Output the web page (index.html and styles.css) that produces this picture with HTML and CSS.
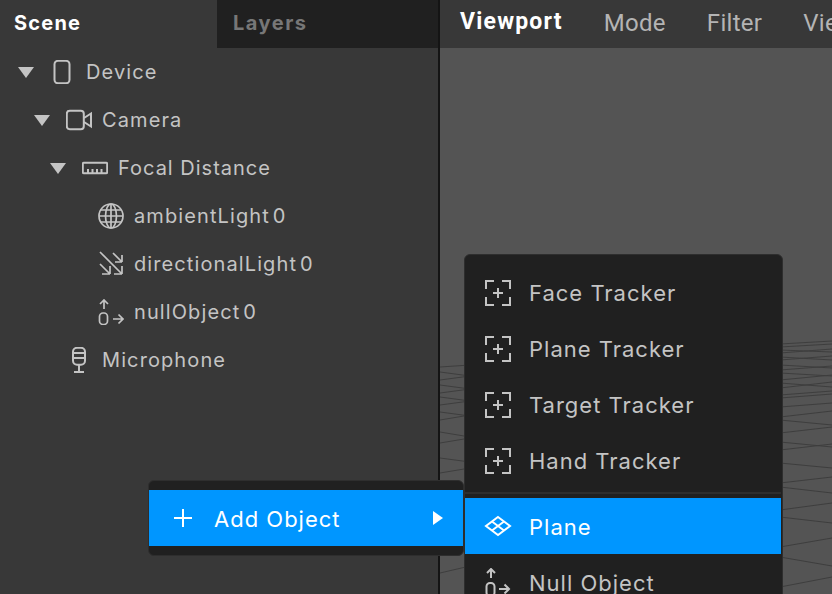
FILE: index.html
```html
<!DOCTYPE html>
<html lang="en">
<head>
    <meta charset="UTF-8">
    <title>Scene</title>
    <link rel="stylesheet" href="styles.css">
</head>
<body>
    <div class="app">
        <aside class="scene-panel">
            <div class="tabs">
                <div class="tab active">Scene</div>
                <div class="tab dim">Layers</div>
            </div>
            <ul class="tree">
                <li class="row lvl0">
                    <span class="caret"></span>
                    <svg class="ico" viewBox="0 0 26 24"><rect x="4.500" y="0.800" width="15" height="22.400" rx="3.500"/></svg>
                    <span class="name">Device</span>
                </li>
                <li class="row lvl1">
                    <span class="caret"></span>
                    <svg class="ico" viewBox="0 0 26 24"><rect x="0.800" y="2.800" width="17" height="18.400" rx="3"/><path d="M18 10l7-4.500v13L18 14"/></svg>
                    <span class="name">Camera</span>
                </li>
                <li class="row lvl2">
                    <span class="caret"></span>
                    <svg class="ico" viewBox="0 0 26 24"><rect x="0.800" y="6.800" width="24.400" height="10.400" rx="1"/><path d="M6 17v-4M10.500 17v-4M15 17v-4M19.500 17v-4"/></svg>
                    <span class="name focal">Focal Distance</span>
                </li>
                <li class="row lvl3">
                    <svg class="ico" viewBox="0 0 26 26"><circle cx="13" cy="13" r="12"/><ellipse cx="13" cy="13" rx="5.500" ry="12"/><path d="M13 1v24M1 13h24M3 7h20M3 19h20"/></svg>
                    <span class="name">ambientLight<span class="idx">0</span></span>
                </li>
                <li class="row lvl3">
                    <svg class="ico" viewBox="0 0 26 26"><path d="M2 1l22 22M24 23h-8M24 23v-8M2 13l10 10M12 23H4M12 23v-8M15 2l9 9M24 11h-7M24 11V4"/></svg>
                    <span class="name">directionalLight<span class="idx">0</span></span>
                </li>
                <li class="row lvl3">
                    <svg class="ico" viewBox="0 0 26 26"><path d="M6 10V1M2 5l4-4 4 4"/><rect x="1.500" y="14" width="8" height="11.500" rx="3.500"/><path d="M15 20h10M20.500 15.500l4.500 4.500-4.500 4.500"/></svg>
                    <span class="name">nullObject<span class="idx">0</span></span>
                </li>
                <li class="row lvl1 no-caret">
                    <svg class="ico mic" viewBox="0 0 14 26"><rect x="1" y="0.800" width="12" height="17" rx="4"/><path d="M1 6h12M1 11h12M7 18v7M2 25h10"/></svg>
                    <span class="name">Microphone</span>
                </li>
            </ul>
        </aside>
        <main class="viewport">
            <nav class="topbar">
                <span class="top-item active">Viewport</span>
                <span class="top-item">Mode</span>
                <span class="top-item">Filter</span>
                <span class="top-item">View</span>
            </nav>
            <div class="canvas">
                <!-- viewBox uses page coords so the floor lines are easy to read off -->
                <svg class="floor" viewBox="440 48 392 546">
                    <path d="M440 367L470 365M440 372L470 376M440 380L470 376M440 385L470 389M440 393L470 389M440 397L470 401M440 405L470 401M440 412L470 416M440 420L470 415M440 432L470 437M440 443L470 438M440 458L470 462M440 473L470 468M440 573L470 566"/>
                    <path d="M780 344L832 341M780 347L832 344M780 350L832 352M780 353L832 349M780 357L832 360M780 360L832 356M780 365L832 368M780 370L832 366M780 373L832 376M780 380L832 375M780 383L832 387M780 388L832 382M780 395L832 391M780 398L832 394M780 407L832 403M780 417L832 411M780 420L832 425M780 433L832 427M780 442L832 447M780 450L832 444M780 463L832 468M780 483L832 477M780 487L832 493M780 510L832 503M780 517L832 523M780 547L832 538M780 557L832 566M780 587L832 577"/>
                </svg>
            </div>
        </main>
    </div>

    <div class="menu add-menu">
        <div class="item selected">
            <svg class="plus" viewBox="0 0 20 20"><path d="M1 10h18M10 1v18"/></svg>
            <span class="label">Add Object</span>
            <span class="sub-arrow"></span>
        </div>
    </div>

    <div class="menu object-menu">
        <div class="group">
            <div class="item">
                <svg class="mico" viewBox="0 0 28 28"><path d="M2 10V2h8M18 2h8v8M2 18v8h8M18 26h8v-8M14 9v10M9 14h10"/></svg>
                <span class="label">Face Tracker</span>
            </div>
            <div class="item">
                <svg class="mico" viewBox="0 0 28 28"><path d="M2 10V2h8M18 2h8v8M2 18v8h8M18 26h8v-8M14 9v10M9 14h10"/></svg>
                <span class="label">Plane Tracker</span>
            </div>
            <div class="item">
                <svg class="mico" viewBox="0 0 28 28"><path d="M2 10V2h8M18 2h8v8M2 18v8h8M18 26h8v-8M14 9v10M9 14h10"/></svg>
                <span class="label">Target Tracker</span>
            </div>
            <div class="item">
                <svg class="mico" viewBox="0 0 28 28"><path d="M2 10V2h8M18 2h8v8M2 18v8h8M18 26h8v-8M14 9v10M9 14h10"/></svg>
                <span class="label">Hand Tracker</span>
            </div>
        </div>
        <div class="group">
            <div class="item selected">
                <svg class="mico" viewBox="0 0 28 28"><path d="M14 5l12 9-12 9-12-9zM8 9.500l12 9M20 9.500l-12 9"/></svg>
                <span class="label">Plane</span>
            </div>
            <div class="item">
                <svg class="mico" viewBox="0 0 28 28"><path d="M7 10V1M3 5l4-4 4 4"/><rect x="2.500" y="15" width="8" height="13" rx="3.500"/><path d="M15 21h10M20.500 16.500l4.500 4.500-4.500 4.500"/></svg>
                <span class="label">Null Object</span>
            </div>
        </div>
    </div>
</body>
</html>
```

FILE: styles.css
```css
html, body {
    margin: 0;
    padding: 0;
    height: 100%;
    overflow: hidden;
}
body {
    position: relative;
    background-color: #363636;
    font-family: Inter, "Liberation Sans", sans-serif;
    color: #c4c4c4;
}
.app {
    display: flex;
    height: 594px;
}
.scene-panel {
    width: 438px;
    background-color: #383838;
    border-right: 2px solid #141414;
}
.tabs {
    display: flex;
    height: 48px;
}
.tab {
    width: 217px;
    padding-left: 14px;
    box-sizing: border-box;
    line-height: 46px;
    font-size: 20px;
    font-weight: 700;
    letter-spacing: 1.2px;
}
.tab.active {
    color: #fff;
}
.tab.dim {
    flex: 1;
    padding-left: 16px;
    background-color: #202020;
    color: #777;
    letter-spacing: 1.5px;
}
.tree {
    list-style: none;
    margin: 0;
    padding: 0;
}
.row {
    display: flex;
    align-items: center;
    height: 48px;
}
.lvl0 { padding-left: 18px; }
.lvl1 { padding-left: 34px; }
.lvl2 { padding-left: 50px; }
.lvl3 { padding-left: 98px; }
.lvl1.no-caret { padding-left: 72px; }
.caret {
    width: 0;
    height: 0;
    margin-right: 16px;
    border-left: 8px solid transparent;
    border-right: 8px solid transparent;
    border-top: 11px solid #c4c4c4;
}
.ico {
    width: 26px;
    height: 24px;
    flex: none;
    fill: none;
    stroke: #c4c4c4;
    stroke-width: 2;
}
.lvl3 .ico {
    height: 26px;
    stroke-width: 1.7;
}
.ico.mic {
    width: 14px;
    height: 26px;
}
.name {
    margin-left: 10px;
    font-size: 20px;
    letter-spacing: 1.1px;
}
.name.focal {
    letter-spacing: 1px;
}
.idx {
    margin-left: 3px;
}
.no-caret .name {
    margin-left: 16px;
}
.viewport {
    flex: 1;
    display: flex;
    flex-direction: column;
    min-width: 0;
}
.topbar {
    display: flex;
    height: 48px;
    flex: none;
    gap: 41px;
    padding-left: 20px;
    background-color: #383838;
    white-space: nowrap;
    overflow: hidden;
}
.top-item {
    font-family: Roboto, sans-serif;
    font-size: 24px;
    line-height: 46px;
    letter-spacing: 0.3px;
    color: #b4b4b4;
}
.top-item.active {
    font-size: 23px;
    line-height: 44px;
    font-weight: 700;
    letter-spacing: 1.2px;
    color: #fff;
}
.canvas {
    flex: 1;
    position: relative;
    background-color: #545454;
}
.floor {
    position: absolute;
    left: 0;
    top: 0;
    width: 100%;
    height: 100%;
    fill: none;
    stroke: #3e3e3e;
    stroke-width: 1;
}
.menu {
    position: absolute;
    box-sizing: border-box;
    background-color: #202020;
    border: 1px solid #2e2e2e;
    border-radius: 6px;
}
.add-menu {
    left: 148px;
    top: 480px;
    width: 316px;
    padding: 9px 0;
}
.object-menu {
    left: 464px;
    top: 254px;
    width: 319px;
    height: 360px;
    padding: 10px 1px 0 0;
}
.group + .group {
    margin-top: 3px;
    padding-top: 4px;
    border-top: 2px solid #2e2e2e;
}
.item {
    display: flex;
    align-items: center;
    height: 56px;
    padding-left: 19px;
    font-size: 22px;
    letter-spacing: 1px;
    color: #c4c4c4;
}
.item.selected {
    background-color: #0096ff;
    color: #fff;
}
.add-menu .item {
    position: relative;
    padding-left: 24px;
}
.add-menu .label, .group + .group .label {
    padding-top: 2px;
}
.plus {
    width: 20px;
    height: 20px;
    margin-right: 21px;
    fill: none;
    stroke: #fff;
    stroke-width: 2;
}
.sub-arrow {
    position: absolute;
    right: 20px;
    top: 21px;
    width: 0;
    height: 0;
    border-top: 7px solid transparent;
    border-bottom: 7px solid transparent;
    border-left: 10px solid #fff;
}
.mico {
    width: 28px;
    height: 28px;
    margin-right: 17px;
    flex: none;
    fill: none;
    stroke: currentColor;
    stroke-width: 2;
}
```
